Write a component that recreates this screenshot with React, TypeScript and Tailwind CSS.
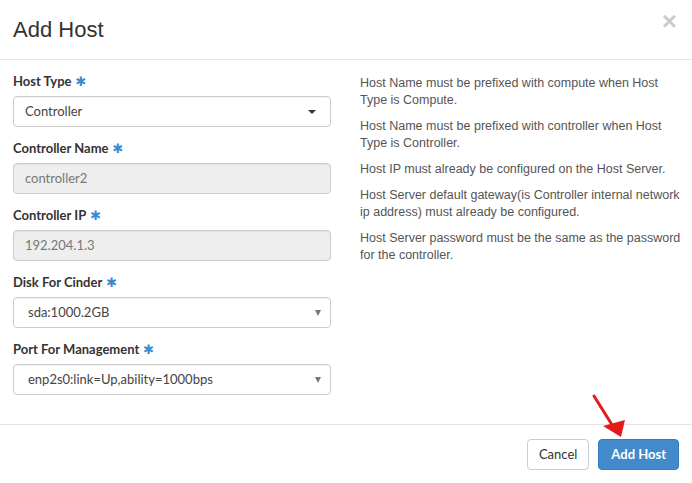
import React from 'react';

const fields = [
  { label: 'Host Type', value: 'Controller', kind: 'picker' },
  { label: 'Controller Name', value: 'controller2', kind: 'disabled' },
  { label: 'Controller IP', value: '192.204.1.3', kind: 'disabled' },
  { label: 'Disk For Cinder', value: 'sda:1000.2GB', kind: 'native' },
  { label: 'Port For Management', value: 'enp2s0:link=Up,ability=1000bps', kind: 'native' },
];

const notes = [
  'Host Name must be prefixed with compute when Host Type is Compute.',
  'Host Name must be prefixed with controller when Host Type is Controller.',
  'Host IP must already be configured on the Host Server.',
  'Host Server default gateway(is Controller internal network ip address) must already be configured.',
  'Host Server password must be the same as the password for the controller.',
];

function Field({ label, value, kind }: { label: string; value: string; kind: string }) {
  const box =
    kind === 'disabled'
      ? 'bg-[#eeeeee] text-[#777]'
      : 'bg-white text-[#444]';
  return (
    <div className="mb-[11px]">
      <div className="h-[20px] leading-[20px] text-[13px] font-bold text-[#333] mb-[5px] flex items-center">
        {label}
        <span className="ml-[4px] text-[#3b8bd0] text-[13px] font-['DejaVu_Sans'] leading-none">✱</span>
      </div>
      <div
        className={`h-[31px] border border-[#cccccc] rounded-[4px] flex items-center justify-between text-[13px] shadow-[inset_0_1px_1px_rgba(0,0,0,0.05)] ${box} ${
          kind === 'native' ? 'pl-[14px] pr-[9px]' : 'pl-[11px] pr-[14px]'
        }`}
      >
        <span>{value}</span>
        {kind === 'picker' && (
          <span className="w-0 h-0 border-l-[4px] border-r-[4px] border-t-[4px] border-l-transparent border-r-transparent border-t-[#333]" />
        )}
        {kind === 'native' && (
          <span className="w-0 h-0 border-l-[3px] border-r-[3px] border-t-[6px] border-l-transparent border-r-transparent border-t-[#777]" />
        )}
      </div>
    </div>
  );
}

export default function App() {
  return (
    <div className="w-[692px] h-[483px] bg-white relative overflow-hidden font-['Lato','Liberation_Sans',sans-serif]">
      {/* header */}
      <div className="h-[60px] border-b border-[#e5e5e5] flex justify-between pl-[13px] pr-[15px]">
        <h4 className="text-[22px] font-['Liberation_Sans',sans-serif] text-[#333] leading-none mt-[19px]">Add Host</h4>
        <span className="font-['Liberation_Sans',sans-serif] font-bold text-[26px] leading-none text-black opacity-20 mt-[8px]">×</span>
      </div>

      {/* body */}
      <div className="h-[364px] flex pl-[13px] pt-[11px]">
        <div className="w-[318px]">
          {fields.map((f) => (
            <Field key={f.label} {...f} />
          ))}
        </div>
        <div className="ml-[29px] w-[324px] pt-[4px] font-['Liberation_Sans',sans-serif] text-[12.5px] leading-[17px] text-[#555]">
          {notes.map((n) => (
            <p key={n} className="mb-[9px]">{n}</p>
          ))}
        </div>
      </div>

      {/* footer */}
      <div className="border-t border-[#e5e5e5] flex justify-end items-start pt-[14px] pr-[13px] gap-[9px]">
        <button className="h-[31px] px-[11px] border border-[#cccccc] rounded-[4px] bg-white text-[#333] text-[13px]">
          Cancel
        </button>
        <button className="h-[31px] px-[12px] border border-[#357ebd] rounded-[4px] bg-[#428bca] text-white text-[13px] font-bold">
          Add Host
        </button>
      </div>

      {/* annotation arrow */}
      <svg className="absolute left-0 top-0 pointer-events-none" width="692" height="483">
        <line x1="594" y1="396" x2="614" y2="428" stroke="#e31b1b" strokeWidth="3" strokeLinecap="round" />
        <polygon points="621,437 603,426 625,420" fill="#e31b1b" />
      </svg>
    </div>
  );
}
